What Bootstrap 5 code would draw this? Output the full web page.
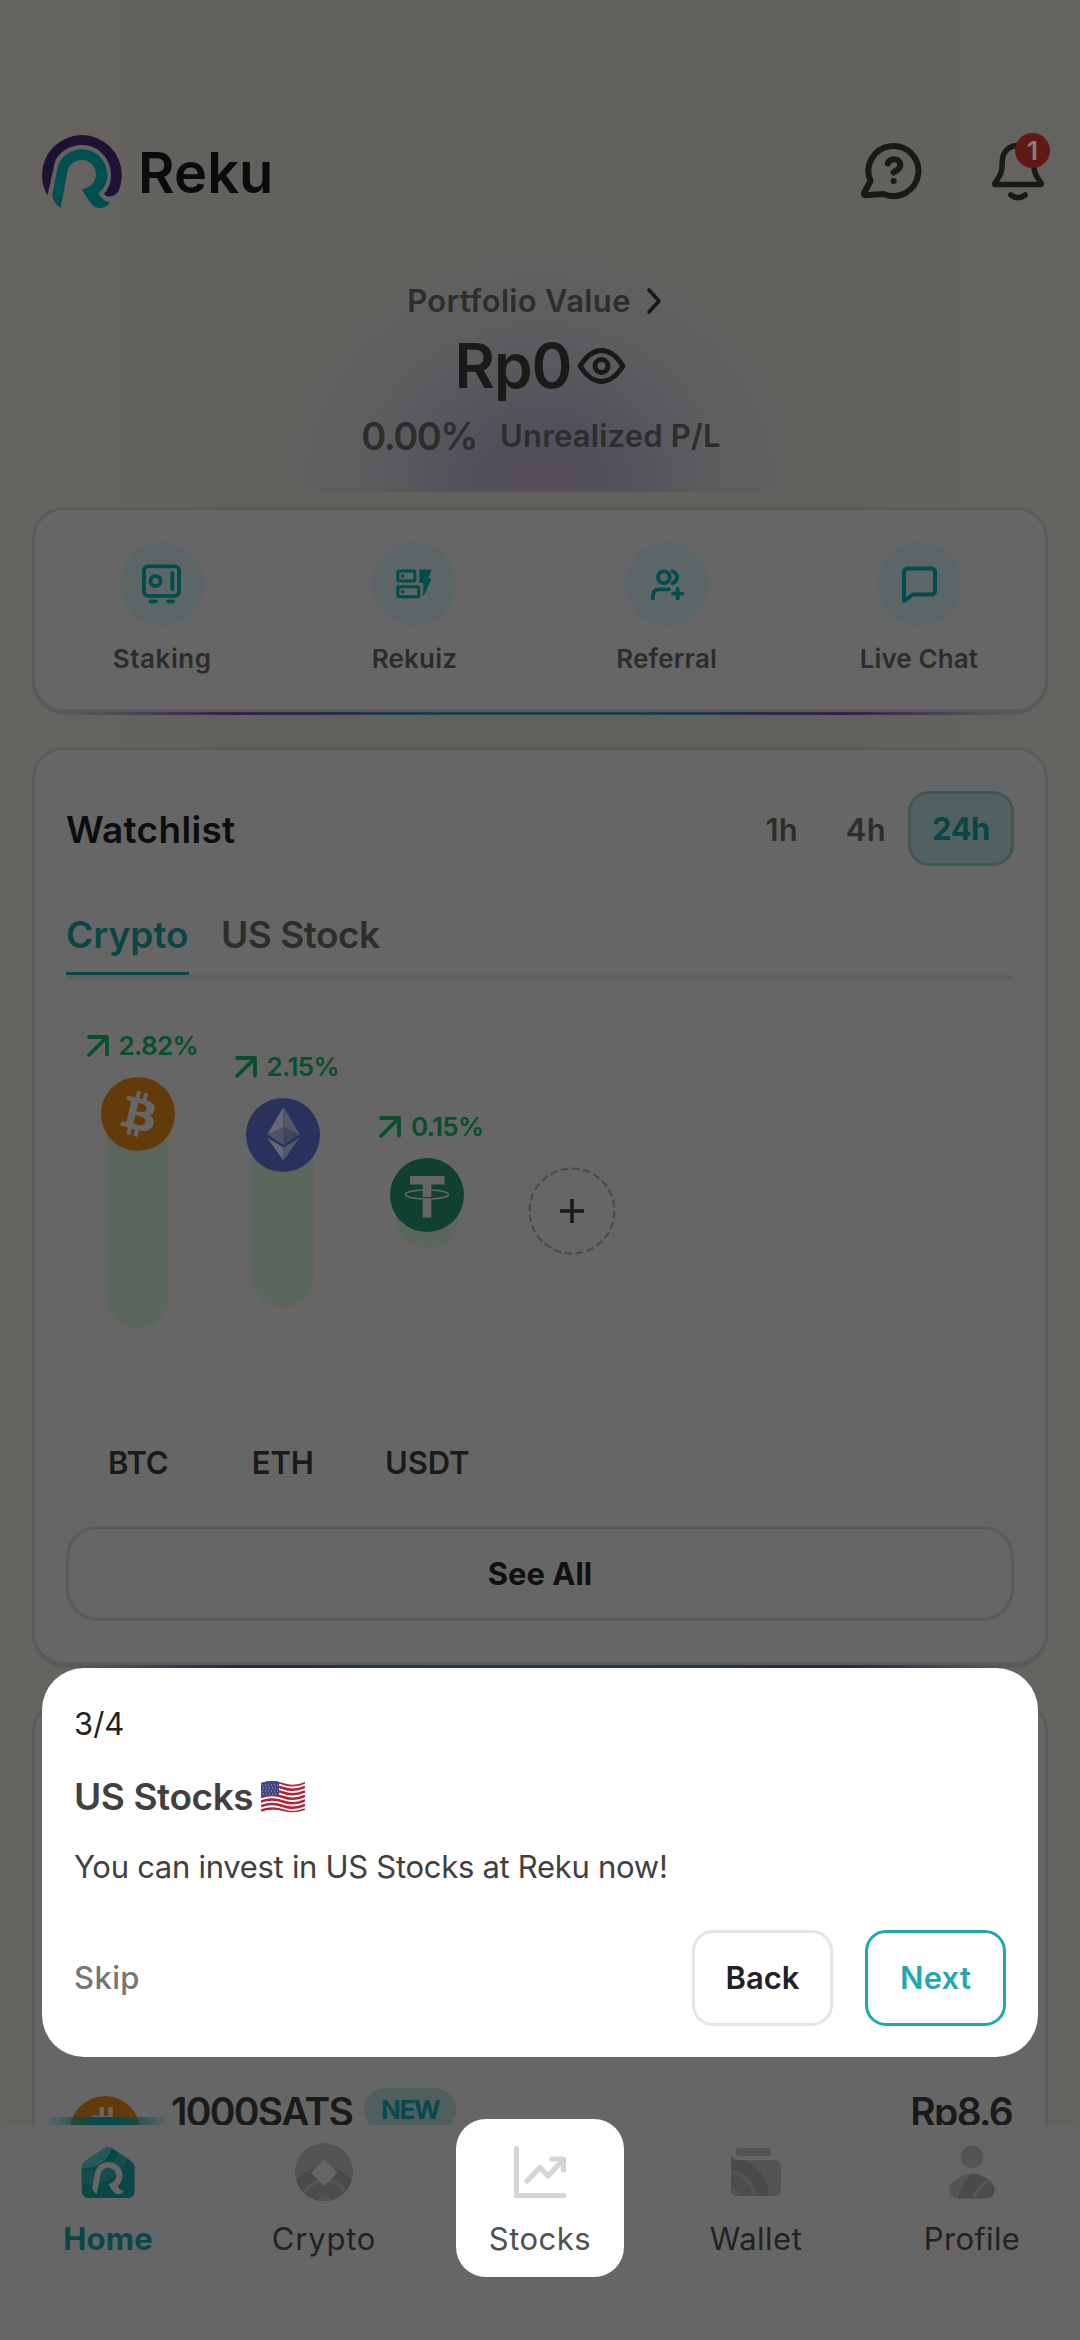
<!DOCTYPE html>
<html lang="en">
<head>
<meta charset="utf-8">
<meta name="viewport" content="width=device-width, initial-scale=1">
<title>Reku</title>
<link href="https://cdn.jsdelivr.net/npm/bootstrap@5.3.0/dist/css/bootstrap.min.css" rel="stylesheet">
<style>
body{width:1080px;height:2340px;overflow:hidden;position:relative;background:linear-gradient(90deg,#656460,#62615e 20%,#62615e 80%,#656460);font-family:Inter,"Noto Sans",sans-serif;color:#1a1a18;font-size:31px;line-height:40px;white-space:nowrap}
svg{display:block;flex:none}
.topbar{height:244px;padding:133px 33px 0 40px}
.brand{font-size:56px;font-weight:600;color:#0c0b0c;line-height:80px;margin-left:14px;letter-spacing:.1px}
.bell-count{left:26px;top:-7px;width:35px;height:35px;border-radius:50%;background:#5f1a17;color:#8a8080;font-size:26px;font-weight:600;line-height:35px}
.hero{height:248px;background:radial-gradient(282px 262px at 50% 100%,#544e5a 0,#53505a 28%,#59585d 48%,#5f5e60 70%,#61615f 90%,transparent 100%);padding-top:37px}
.dim{color:#2d2d2c}
.portfolio{gap:15px;padding-right:9px;letter-spacing:.33px}
.balance{height:90px;gap:5px;font-size:62px;font-weight:600;letter-spacing:-1px}
.profit{height:50px;gap:23px;letter-spacing:.21px;padding-left:2px}
.profit-pct{font-size:38px;letter-spacing:-1.55px}
.edge{margin:0 32px;border-radius:34px;padding-bottom:3px;background:linear-gradient(90deg,#5a595b 4%,#36204a 20%,#14444a 40%,#14444a 60%,#36204a 80%,#5a595b 96%)}
.panel{background:#666;border:3px solid #5b5b5b;border-radius:32px}
.quick{height:205px;padding:32px 0 0 1px}
.quick-item{width:253px;font-size:26px;font-weight:600;color:#2c2c2b;gap:13px;letter-spacing:.2px}
.bubble{width:84px;height:84px;border-radius:50%;background:#5c6666;color:#024c4d}
.watch{height:918px;padding:41px 31px 0}
.ranges{height:75px;padding-top:3px}
.list-title{font-size:37px;color:#0d0d0c;letter-spacing:.31px}
.range-on{width:106px;height:75px;border-radius:21px;border:3px solid #3f5656;background:#536060;color:#084647;font-weight:700;margin-top:-3px;letter-spacing:-.5px}
.tabs{height:83px;border-bottom:5px solid #606060;gap:32px;font-size:37px;font-weight:600;margin-top:31px;padding:0}
.tabs>div{padding-top:18px}
.tab-on{color:#0b4647;height:78px;border-bottom:3px solid #0b4647;width:123px}
.coins{height:477px;margin:26px -1px 0 0}
.coin{width:144.5px;height:477px}
.pct{color:#084f2b;font-size:26px;font-weight:600;height:40px;gap:10px;padding-left:8px;margin-bottom:11px;letter-spacing:-.66px}
.bar{width:62px;border-radius:0 0 31px 31px;background:#5b665d;margin-top:-36px}
.disc{position:relative;z-index:1}
.sym{font-weight:600;margin-top:auto;letter-spacing:-.12px}
.btn-all{height:95px;border:3px solid #5b5b5b;border-radius:32px;font-weight:700;color:#10100f;margin-top:43px}
.market{margin:32px 32px 0;height:700px}
.market-row{padding:359px 33px 0 35px;height:430px}
.ticker{font-weight:600;font-size:39px;line-height:44px;margin-top:28px;letter-spacing:-1.7px}
.tag-new{width:92px;height:44px;border-radius:22px;background:#4f5f5e;color:#084a4b;font-size:26px;font-weight:700;margin:26px 0 0 12px;letter-spacing:-1.5px}
.haze{left:45px;top:2117px;width:125px;height:8px;background:linear-gradient(90deg,transparent,#024c4d 40%,#024c4d 60%,transparent);z-index:2}
.dock{left:0;top:2125px;width:1080px;height:215px;background:#666;z-index:3}
.dock-item{width:216px;color:#222;padding-top:17px;gap:17px;letter-spacing:.5px}
.dock-item svg{height:60px}
.dock-spot{left:456px;top:-6px;width:168px;height:158px;border-radius:30px;background:#fff}
.tour{left:42px;top:1668px;width:996px;height:389px;border-radius:42px;background:#fff;padding:36px 32px 0;z-index:4;color:#404040}
.tour-title{font-size:37px;font-weight:600;height:48px;margin-top:29px;gap:8px;letter-spacing:-.4px}
.tour-skip{color:#757573;font-weight:500;letter-spacing:.4px}
.btn-tour{width:141px;height:96px;border:3px solid #e5e5e5;border-radius:21px;font-weight:600;color:#222}
.btn-next{border-color:#1fa9ae;color:#1fa9ae;letter-spacing:.22px}
</style>
</head>
<body>
<header class="topbar d-flex align-items-start">
  <svg width="84" height="78"><path fill="#1d1231" d="M7.500 62.300C3.500 56 2 49 2 42A39.900 39.900 0 0 1 81.800 42C81.800 47 80.800 52 79 57C77 62 69 66.500 64 61C69 55 71 49 71 42C71 25 58 12 42 12C29 12 17 20 14.500 31Z"/><path fill="#014f51" d="M20.500 75C15 71 11.500 66 12.500 60L17.500 35C20 24 30 16.300 42 16.300C56 16.300 67.400 28 67.400 42C67.400 49 64 56 58.500 60C60.500 64.500 64 68.500 70 69.300C67 74 62 75.500 58 75C53 74 49 69 42 56.300C50 55 56 49 56 42C56 33.500 50 27 42 27C35 27 29 31 27.500 38Z"/></svg>
  <div class="brand">Reku</div>
  <div class="d-flex ms-auto" style="gap:64px;padding-top:7px">
    <svg width="66" height="62" fill="none" stroke="#191917" stroke-width="6" stroke-linecap="round" stroke-linejoin="round"><path d="M11.500 41A25 25 0 1 1 24.500 54L6.500 55.200Q4.300 55 5.300 52.500Z"/><path d="M28.800 23.500C30 18 40 17 41.300 24.500C41.800 29 37 30.500 34.500 32.500"/><circle cx="34.600" cy="41" r="3" fill="#191917" stroke="none"/></svg>
    <div class="position-relative">
      <svg width="58" height="62" fill="none" stroke="#191917" stroke-width="5.500" stroke-linecap="round" stroke-linejoin="round"><path d="M28.900 5.500C20 5.500 13.500 12 13.300 21C13.200 34 10.500 36.500 6 43Q5 44.500 7 44.500H51Q53 44.500 52 43C47.500 36.500 44.800 34 44.600 21C44.400 12 38 5.500 28.900 5.500Z"/><path d="M21.800 55Q29 60.500 36.200 55"/></svg>
      <span class="bell-count position-absolute text-center">1</span>
    </div>
  </div>
</header>
<section class="hero d-flex flex-column align-items-center">
  <div class="dim portfolio d-flex align-items-center fw-semibold"><span>Portfolio Value</span><svg width="18" height="28" fill="none" stroke="#191917" stroke-width="3.600" stroke-linecap="round" stroke-linejoin="round"><path d="M3 3L13 14L3 25"/></svg></div>
  <div class="balance d-flex align-items-center"><span>Rp0</span><svg width="49" height="42" fill="none" stroke="#191917" stroke-width="5"><path stroke-linejoin="round" d="M3 21Q13 5.500 24.500 5.500Q36 5.500 46 21Q36 36.500 24.500 36.500Q13 36.500 3 21Z"/><circle cx="24.500" cy="21" r="6.500"/></svg></div>
  <div class="dim profit d-flex align-items-center fw-semibold"><span class="profit-pct">0.00%</span><span>Unrealized P/L</span></div>
</section>
<section class="edge" style="margin-top:15px">
  <div class="panel quick d-flex">
    <div class="quick-item d-flex flex-column align-items-center"><div class="bubble d-flex align-items-center justify-content-center"><svg width="44" height="44" fill="none" stroke="currentColor" stroke-width="3.800" stroke-linecap="round"><rect x="4" y="4.300" width="35" height="29.500" rx="4"/><circle cx="15.500" cy="19" r="5"/><path d="M32.300 11V27M10.500 39.300H16M28 39.300H33"/></svg></div><div style="letter-spacing:.56px">Staking</div></div>
    <div class="quick-item d-flex flex-column align-items-center"><div class="bubble d-flex align-items-center justify-content-center"><svg width="44" height="44" fill="none" stroke="currentColor" stroke-width="3"><rect x="5.800" y="9.100" width="17" height="10" rx="1"/><rect x="5.800" y="24.800" width="21" height="10" rx="1"/><path fill="currentColor" stroke="none" d="M27.400 7.600H39.500L36.500 16.800H39.500L31.200 35V21H27.400ZM9 12.600h3v3H9ZM9 28.300h3v3H9Z"/></svg></div><div>Rekuiz</div></div>
    <div class="quick-item d-flex flex-column align-items-center"><div class="bubble d-flex align-items-center justify-content-center"><svg width="44" height="44" fill="none" stroke="currentColor" stroke-width="3.800" stroke-linecap="round"><circle cx="18.900" cy="15.300" r="5.900"/><path d="M27.500 9.300Q32 11 32 15.300T27.500 21.300M7.900 36.500V34Q7.900 27.300 14.400 27.300H24M32.700 27V36.500M28 31.700H37.500"/></svg></div><div>Referral</div></div>
    <div class="quick-item d-flex flex-column align-items-center"><div class="bubble d-flex align-items-center justify-content-center"><svg width="44" height="44" fill="none" stroke="currentColor" stroke-width="4" stroke-linejoin="round"><path d="M11 6.500H34Q38 6.500 38 10.500V28.500Q38 32.500 34 32.500H16L7 39V10.500Q7 6.500 11 6.500Z"/></svg></div><div style="letter-spacing:.1px">Live Chat</div></div>
  </div>
</section>
<section class="edge" style="margin-top:32px">
  <div class="panel watch">
    <div class="ranges d-flex align-items-center dim fw-semibold"><span class="list-title me-auto">Watchlist</span><span style="margin-right:48px">1h</span><span style="margin-right:22px;letter-spacing:.35px">4h</span><span class="range-on d-flex align-items-center justify-content-center">24h</span></div>
    <div class="tabs d-flex"><div class="tab-on">Crypto</div><div class="dim" style="letter-spacing:-.49px">US Stock</div></div>
    <div class="coins d-flex">
      <div class="coin d-flex flex-column align-items-center"><div class="pct d-flex align-items-center" style="margin-top:20px"><svg width="22" height="22" fill="none" stroke="currentColor" stroke-width="3.800" stroke-linecap="round" stroke-linejoin="round"><path d="M2 2H20V19.500M20 2L2 20"/></svg><span>2.82%</span></div>
        <svg class="disc" width="74" height="74" viewBox="0 0 32 32"><circle cx="16" cy="16" r="16" fill="#633b0a"/><path fill="#666" d="M23.189 14.02c.314-2.096-1.283-3.223-3.465-3.975l.708-2.84-1.728-.43-.69 2.765c-.454-.114-.92-.22-1.385-.326l.695-2.783L15.596 6l-.708 2.839c-.376-.086-.746-.17-1.104-.26l.002-.009-2.384-.595-.46 1.846s1.283.294 1.256.312c.7.175.826.638.805 1.006l-.806 3.235c.048.012.11.03.18.057l-.183-.045-1.13 4.532c-.086.212-.303.531-.793.41.018.025-1.256-.313-1.256-.313l-.858 1.978 2.25.561c.418.105.828.215 1.231.318l-.715 2.872 1.727.43.708-2.84c.472.127.93.245 1.378.357l-.706 2.828 1.728.43.715-2.866c2.948.558 5.164.333 6.097-2.333.752-2.146-.037-3.385-1.588-4.192 1.13-.26 1.98-1.003 2.207-2.538zm-3.95 5.538c-.533 2.147-4.148.986-5.32.695l.95-3.805c1.172.293 4.929.872 4.37 3.11zm.535-5.569c-.487 1.953-3.495.96-4.47.717l.86-3.45c.975.243 4.118.696 3.61 2.733z"/></svg>
        <div class="bar" style="height:213px"></div><span class="sym">BTC</span></div>
      <div class="coin d-flex flex-column align-items-center"><div class="pct d-flex align-items-center" style="margin-top:41px"><svg width="22" height="22" fill="none" stroke="currentColor" stroke-width="3.800" stroke-linecap="round" stroke-linejoin="round"><path d="M2 2H20V19.500M20 2L2 20"/></svg><span>2.15%</span></div>
        <svg class="disc" width="74" height="74"><circle cx="37" cy="37" r="37" fill="#29325d"/><path fill="#666874" d="M37.400 8.700V46.700L21.400 36.300Z"/><path fill="#525769" d="M37.400 8.700L53.700 36.300L37.400 46.700Z"/><path fill="#4d5266" d="M37.400 28.700V46.700L21.400 36.300Z"/><path fill="#3f465c" d="M37.400 28.700L53.700 36.300L37.400 46.700Z"/><path fill="#666874" d="M21.400 39.700L37.400 49.500V62.700Z"/><path fill="#525769" d="M53.700 39.700L37.400 49.500V62.700Z"/></svg>
        <div class="bar" style="height:171px"></div><span class="sym">ETH</span></div>
      <div class="coin d-flex flex-column align-items-center"><div class="pct d-flex align-items-center" style="margin-top:101px"><svg width="22" height="22" fill="none" stroke="currentColor" stroke-width="3.800" stroke-linecap="round" stroke-linejoin="round"><path d="M2 2H20V19.500M20 2L2 20"/></svg><span>0.15%</span></div>
        <svg class="disc" width="74" height="74"><circle cx="37" cy="37" r="37" fill="#0f4032"/><path fill="#666" d="M20 18H54.500V26.500H41.300V39H32.700V26.500H20ZM32.700 40.800H41.300V59.500H32.700Z"/><ellipse cx="37" cy="36.500" rx="21.500" ry="4.500" fill="none" stroke="#666" stroke-width="1.600"/></svg>
        <div class="bar" style="height:52px"></div><span class="sym">USDT</span></div>
      <div class="coin d-flex flex-column align-items-center"><svg style="margin-top:161px" width="88" height="88" fill="none"><circle cx="44" cy="44" r="42.500" stroke="#4b4b4a" stroke-width="2.200" stroke-dasharray="7.600 3.500"/><path stroke="#1a1a18" stroke-width="3.600" d="M44 32V56M32 44H56"/></svg></div>
    </div>
    <div class="btn-all d-flex align-items-center justify-content-center">See All</div>
  </div>
</section>
<section class="market panel">
  <div class="market-row d-flex align-items-start">
    <svg style="margin:34px 31px 0 0" width="70" height="70" viewBox="0 0 32 32"><circle cx="16" cy="16" r="16" fill="#633b0a"/><path fill="#666" d="M13.500 5h2v4h2V5h2v5c4 1 4 5 1 6H10V9h3.500Z"/></svg>
    <span class="ticker">1000SATS</span>
    <span class="tag-new d-flex align-items-center justify-content-center">NEW</span>
    <span class="ticker ms-auto">Rp8.6</span>
  </div>
</section>
<div class="haze position-absolute"></div>
<nav class="dock position-absolute d-flex">
  <div class="dock-spot position-absolute"></div>
  <div class="dock-item d-flex flex-column align-items-center" style="color:#0b4648;letter-spacing:.18px"><svg width="56" height="60"><clipPath id="hc"><path d="M24 6.500Q28.200 3.500 32.500 6.500L51 19Q54.600 21.500 54.600 26V49Q54.600 56 47.500 56H9Q1.800 56 1.800 49V26Q1.800 21.500 5.500 19Z"/></clipPath><g clip-path="url(#hc)"><path fill="#0b4648" d="M0 0H56V60H0Z"/><path fill="#25595b" d="M0 0H33Q28 28 0 26Z"/><path fill="#1b5052" d="M39 8L48 14Q42 42 0 43V29Q34 29 39 8Z" opacity=".7"/></g><path fill="#666" transform="translate(5.500 11) scale(.55)" d="M20.500 75C15 71 11.500 66 12.500 60L17.500 35C20 24 30 16.300 42 16.300C56 16.300 67.400 28 67.400 42C67.400 49 64 56 58.500 60C60.500 64.500 64 68.500 70 69.300C67 74 62 75.500 58 75C53 74 49 69 42 56.300C50 55 56 49 56 42C56 33.500 50 27 42 27C35 27 29 31 27.500 38Z"/></svg><span class="fw-bold">Home</span></div>
  <div class="dock-item d-flex flex-column align-items-center" style="letter-spacing:.79px"><svg width="60" height="60"><clipPath id="cc"><circle cx="30" cy="30" r="29"/></clipPath><g clip-path="url(#cc)"><path fill="#545452" d="M0 0H60V60H0Z"/><circle cx="30" cy="61" r="36" fill="#4a4a48"/><circle cx="31" cy="62" r="23.500" fill="#4c4c4a" stroke="#545452" stroke-width="4"/><circle cx="31" cy="62" r="8" fill="#545452"/></g><path fill="#666" d="M30.300 17.500L43.500 30.700L30.300 44L17.300 30.700Z"/></svg><span>Crypto</span></div>
  <div class="dock-item position-relative d-flex flex-column align-items-center" style="color:#505050"><svg width="60" height="60" fill="none" stroke="#d5d5d3" stroke-width="5.200" stroke-linecap="round" stroke-linejoin="round"><path d="M6.400 6.500V53.600H53.500M17 39L30 25.500L38 34L52 19M42 17H53.500V28"/></svg><span>Stocks</span></div>
  <div class="dock-item d-flex flex-column align-items-center"><svg width="56" height="60"><path fill="#545452" d="M12 6H38Q43 6 43 11V14H12Q7.700 14 7.700 10T12 6Z"/><clipPath id="wc"><path d="M3 12Q4 18 10 18H46Q53 18 53 25V47Q53 54 46 54H10Q3 54 3 47Z"/></clipPath><g clip-path="url(#wc)"><path fill="#545452" d="M0 0H56V60H0Z"/><circle cx="0" cy="56" r="41" fill="#4a4a48"/><circle cx="0" cy="56" r="26" fill="#4d4d4b" stroke="#545452" stroke-width="4"/><circle cx="0" cy="56" r="12" fill="#545452"/></g></svg><span>Wallet</span></div>
  <div class="dock-item d-flex flex-column align-items-center" style="letter-spacing:.33px"><svg width="52" height="60"><circle cx="26" cy="15" r="11.300" fill="#545452"/><clipPath id="pc"><path d="M26 31.700C36 31.700 48.500 40 48.500 47Q48.500 56.300 38 56.300H13Q3 56.300 3 47C3 40 16 31.700 26 31.700Z"/></clipPath><g clip-path="url(#pc)"><path fill="#545452" d="M0 28H52V60H0Z"/><circle cx="57" cy="66" r="46" fill="#4a4a48"/><circle cx="57" cy="66" r="31" fill="#4c4c4a" stroke="#545452" stroke-width="4"/></g></svg><span>Profile</span></div>
</nav>
<section class="tour position-absolute">
  <div style="color:#222">3/4</div>
  <div class="tour-title d-flex align-items-center"><span>US Stocks</span>
    <svg width="44" height="34" viewBox="0 0 44 34"><clipPath id="fc"><path d="M0 3Q11-1 22 3T44 2V30Q33 34 22 31T0 32Z"/></clipPath><g clip-path="url(#fc)"><path fill="#fff" d="M0 0H44V34H0Z"/><g fill="none" stroke="#b22338" stroke-width="2.500"><path d="M0 3.500Q11-.5 22 3.500T44 2.500M0 8Q11 4 22 8T44 7M0 12.500Q11 8.500 22 12.500T44 11.500M0 17Q11 13 22 17T44 16M0 21.500Q11 17.500 22 21.500T44 20.500M0 26Q11 22 22 26T44 25M0 30.500Q11 26.500 22 30.500T44 29.500"/></g><path fill="#46467f" d="M0 0H18V16Q9 14 0 18Z"/><path stroke="#a9a9cc" stroke-width="1" stroke-dasharray="1 2" d="M1 5H17M2 8H17M1 11H17M2 14H17"/></g></svg></div>
  <div style="margin-top:26px;letter-spacing:-.29px">You can invest in US Stocks at Reku now!</div>
  <div class="d-flex align-items-center" style="margin-top:43px;gap:32px"><span class="tour-skip me-auto">Skip</span><span class="btn-tour d-flex align-items-center justify-content-center">Back</span><span class="btn-tour btn-next d-flex align-items-center justify-content-center">Next</span></div>
</section>
<script src="https://cdn.jsdelivr.net/npm/bootstrap@5.3.0/dist/js/bootstrap.bundle.min.js"></script>
</body>
</html>
